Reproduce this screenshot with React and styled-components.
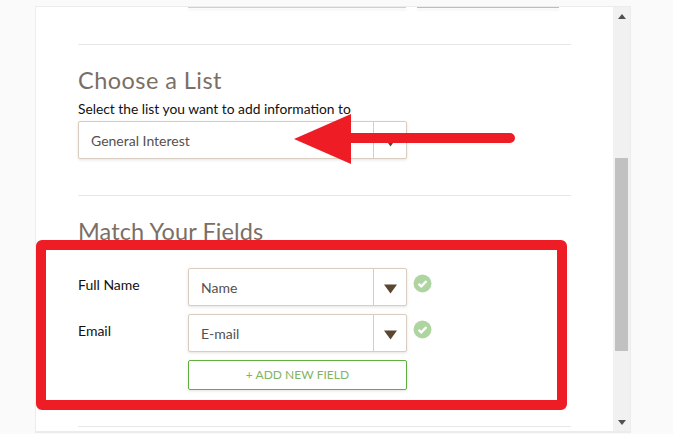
import React from "react";
import styled, { createGlobalStyle } from "styled-components";

const Global = createGlobalStyle`
  html, body { margin: 0; padding: 0; background: #fafafa; }
  body { font-family: "Lato", "Liberation Sans", sans-serif; overflow: hidden; }
`;
const Page = styled.div`
  position: relative;
  width: 673px;
  height: 434px;
  padding: 6px 0 0 35px;
  box-sizing: border-box;
`;
const Frame = styled.div`
  display: flex;
  width: 596px;
  height: 427px;
  box-sizing: border-box;
  background: #fff;
  border: 1px solid #ececec;
  border-bottom-width: 2px;
`;
const Content = styled.div`
  flex: 1;
  padding: 0 42px;
  overflow: hidden;
`;
const Stubs = styled.div`
  display: flex;
  height: 1px;
  margin-left: 110px;
  gap: 11px;
`;
const Stub = styled.div`
  width: ${(p) => p.$w}px;
  height: 1px;
  background: ${(p) => p.$c};
  box-shadow: 0 2px 3px rgba(0, 0, 0, 0.1);
`;
const Rule = styled.hr`
  width: 493px;
  height: 1px;
  margin: ${(p) => p.$mt}px 0 0;
  border: 0;
  background: #e8e8e8;
`;
const Heading = styled.h2`
  margin: ${(p) => p.$mt}px 0 0;
  font-size: 23.5px;
  line-height: 26px;
  font-weight: 400;
  color: #7b6f65;
  letter-spacing: ${(p) => p.$ls}px;
`;
const Hint = styled.p`
  margin: 7px 0 4px;
  font-size: 13.8px;
  line-height: 17px;
  color: #111;
`;
const SelectBox = styled.div`
  display: flex;
  width: ${(p) => p.$w}px;
  height: 38px;
  box-sizing: border-box;
  background: #fff;
  border: 1px solid #d9cdc2;
  border-radius: 2px;
  box-shadow: 0 1px 3px rgba(90, 70, 50, 0.15);
  color: #55504f;
  font-size: 14px;
`;
const SelectValue = styled.div`
  flex: 1;
  padding: 10px 0 0 12px;
  line-height: 17px;
`;
const SelectCaret = styled.div`
  width: 33px;
  border-left: 1px solid #d9cdc2;
  display: flex;
  justify-content: center;
  padding-top: 15px;
  box-sizing: border-box;
`;
const Caret = styled.svg`
  display: block;
  width: 13px;
  height: 10px;
`;
const Row = styled.div`
  display: flex;
  align-items: flex-start;
  margin-top: ${(p) => p.$mt}px;
`;
const FieldLabel = styled.div`
  width: 110px;
  padding-top: 8px;
  font-size: 14px;
  line-height: 17px;
  color: #111;
`;
const Check = styled.svg`
  display: block;
  width: 19px;
  height: 19px;
  margin: 6px 0 0 6px;
`;
const AddButton = styled.div`
  width: 219px;
  height: 30px;
  margin: 8px 0 0 110px;
  box-sizing: border-box;
  border: 1px solid #5fae3f;
  border-radius: 2px;
  box-shadow: 0 1px 3px rgba(60, 90, 40, 0.15);
  text-align: center;
  font-size: 12px;
  line-height: 28px;
  color: #7fb463;
  letter-spacing: 0.03px;
`;
const Scrollbar = styled.div`
  width: 17px;
  background: #f1f1f1;
  display: flex;
  flex-direction: column;
  align-items: center;
  flex-shrink: 0;
`;
const ScrollArrow = styled.svg`
  display: block;
  width: 8px;
  height: 5px;
  margin: ${(p) => p.$m};
`;
const Thumb = styled.div`
  width: 13px;
  height: 193px;
  margin-top: 139px;
  background: #c1c1c1;
`;
const Highlight = styled.div`
  position: absolute;
  left: 36px;
  top: 240px;
  width: 531px;
  height: 170px;
  box-sizing: border-box;
  border: 10px solid #ee1c25;
  border-radius: 6px;
  pointer-events: none;
`;
const ArrowMark = styled.svg`
  position: absolute;
  left: 290px;
  top: 110px;
  width: 230px;
  height: 58px;
`;

const CaretIcon = () => (
  <Caret viewBox="0 0 13 10"><path d="M0 0.5H13L6.5 9.5Z" fill="#5a4631" /></Caret>
);
const CheckIcon = () => (
  <Check viewBox="0 0 19 19">
    <circle cx="9.5" cy="9.5" r="9" fill="#aed5a0" />
    <path d="M5.5 9.8L8.3 12.4L13.5 7" fill="none" stroke="#fff" strokeWidth="2.4" />
  </Check>
);
const Select = ({ value, w }) => (
  <SelectBox $w={w}>
    <SelectValue>{value}</SelectValue>
    <SelectCaret><CaretIcon /></SelectCaret>
  </SelectBox>
);

export default function App() {
  return (
    <Page>
      <Global />
      <Frame>
        <Content>
          <Stubs>
            <Stub $w={218} $c="#d9cdc2" />
            <Stub $w={142} $c="#a9cf98" />
          </Stubs>
          <Rule $mt={36} />
          <Heading $mt={22} $ls={0.45}>Choose a List</Heading>
          <Hint>Select the list you want to add information to</Hint>
          <Select value="General Interest" w={329} />
          <Rule $mt={36} />
          <Heading $mt={22} $ls={0.1}>Match Your Fields</Heading>
          <Row $mt={24}>
            <FieldLabel>Full Name</FieldLabel>
            <Select value="Name" w={219} />
            <CheckIcon />
          </Row>
          <Row $mt={8}>
            <FieldLabel>Email</FieldLabel>
            <Select value="E-mail" w={219} />
            <CheckIcon />
          </Row>
          <AddButton>+ ADD NEW FIELD</AddButton>
          <Rule $mt={36} />
        </Content>
        <Scrollbar>
          <ScrollArrow viewBox="0 0 8 5" $m="7px 0 0"><path d="M4 0L8 5H0Z" fill="#505050" /></ScrollArrow>
          <Thumb />
          <ScrollArrow viewBox="0 0 8 5" $m="auto 0 6px"><path d="M4 5L8 0H0Z" fill="#505050" /></ScrollArrow>
        </Scrollbar>
      </Frame>
      <Highlight />
      <ArrowMark viewBox="0 0 230 58">
        <path d="M4 29L61 4V23H220a5 5 0 0 1 0 10H61V54Z" fill="#ee1c25" />
      </ArrowMark>
    </Page>
  );
}
